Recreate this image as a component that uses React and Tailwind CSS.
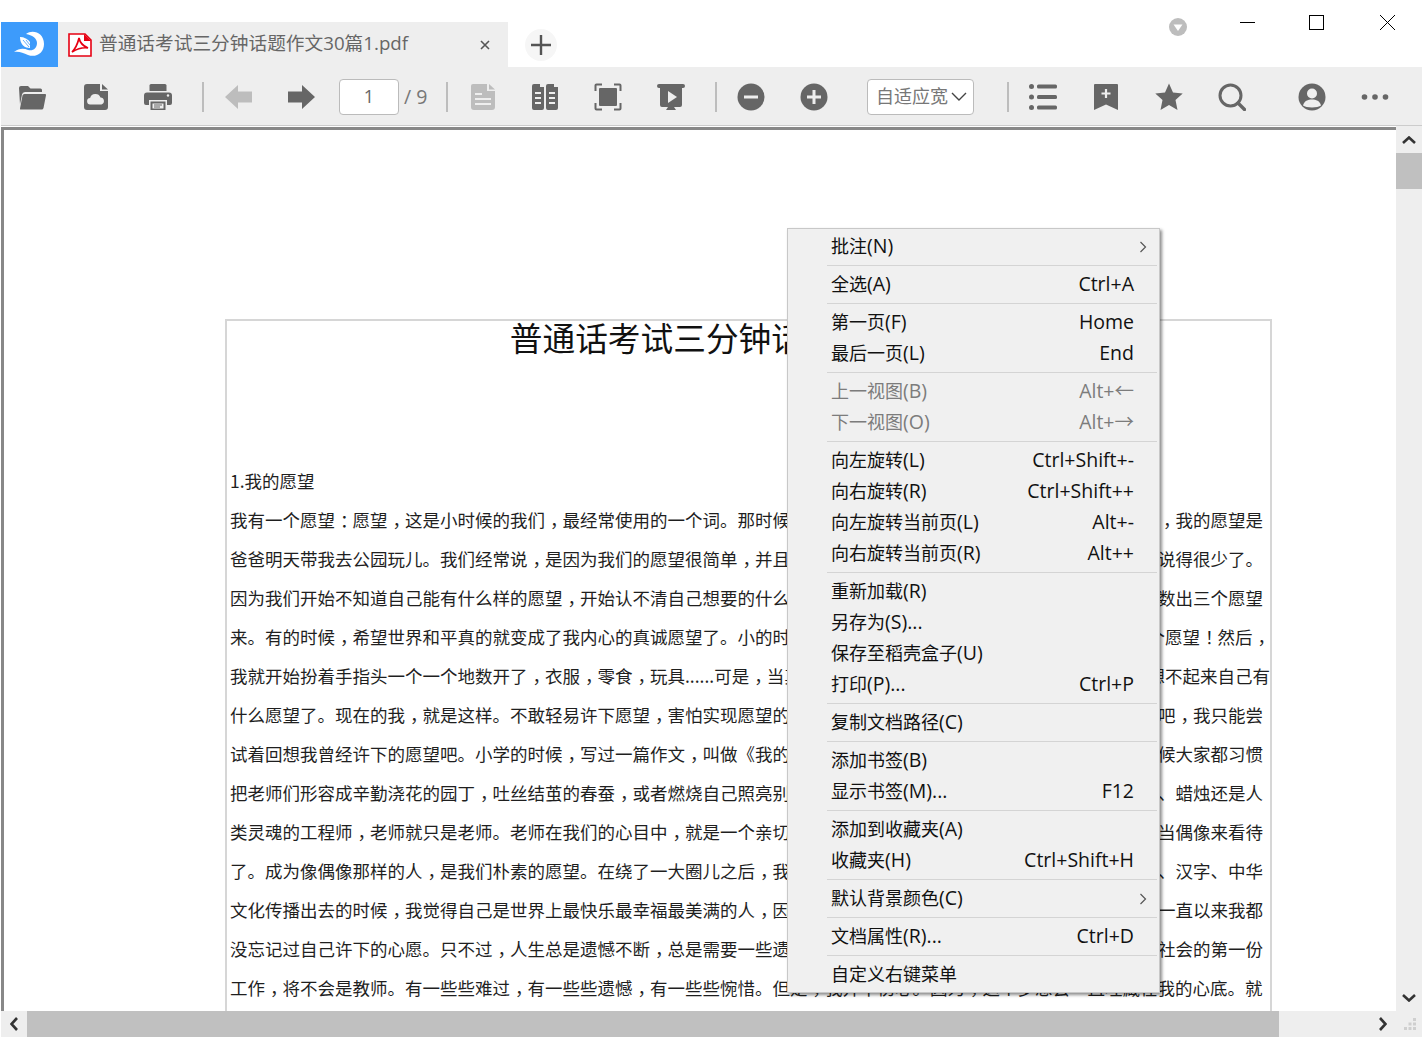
import React from "react";

const PAGE_LINES = [
  ["我有一个愿望：愿望，这是小时候的我们，最经常使用的一个词。那时候，", "，我的愿望是"],
  ["爸爸明天带我去公园玩儿。我们经常说，是因为我们的愿望很简单，并且", "说得很少了。"],
  ["因为我们开始不知道自己能有什么样的愿望，开始认不清自己想要的什么", "数出三个愿望"],
  ["来。有的时候，希望世界和平真的就变成了我内心的真诚愿望了。小的时候", "个愿望！然后，", true],
  ["我就开始扮着手指头一个一个地数开了，衣服，零食，玩具......可是，当真", "想不起来自己有", true],
  ["什么愿望了。现在的我，就是这样。不敢轻易许下愿望，害怕实现愿望的", "吧，我只能尝"],
  ["试着回想我曾经许下的愿望吧。小学的时候，写过一篇作文，叫做《我的", "候大家都习惯"],
  ["把老师们形容成辛勤浇花的园丁，吐丝结茧的春蚕，或者燃烧自己照亮别", "、蜡烛还是人"],
  ["类灵魂的工程师，老师就只是老师。老师在我们的心目中，就是一个亲切", "当偶像来看待"],
  ["了。成为像偶像那样的人，是我们朴素的愿望。在绕了一大圈儿之后，我", "、汉字、中华"],
  ["文化传播出去的时候，我觉得自己是世界上最快乐最幸福最美满的人，因", "一直以来我都"],
  ["没忘记过自己许下的心愿。只不过，人生总是遗憾不断，总是需要一些遗", "社会的第一份"],
  ["工作，将不会是教师。有一些些难过，有一些些遗憾，有一些些惋惜。但是，我并不伤心。因为，这个梦想会一直埋藏在我的心底。就", ""],
];

// null = separator
const MENU = [
  { label: "批注(N)", arrow: true },
  null,
  { label: "全选(A)", key: "Ctrl+A" },
  null,
  { label: "第一页(F)", key: "Home" },
  { label: "最后一页(L)", key: "End" },
  null,
  { label: "上一视图(B)", key: "Alt+←", off: true },
  { label: "下一视图(O)", key: "Alt+→", off: true },
  null,
  { label: "向左旋转(L)", key: "Ctrl+Shift+-" },
  { label: "向右旋转(R)", key: "Ctrl+Shift++" },
  { label: "向左旋转当前页(L)", key: "Alt+-" },
  { label: "向右旋转当前页(R)", key: "Alt++" },
  null,
  { label: "重新加载(R)" },
  { label: "另存为(S)..." },
  { label: "保存至稻壳盒子(U)" },
  { label: "打印(P)...", key: "Ctrl+P" },
  null,
  { label: "复制文档路径(C)" },
  null,
  { label: "添加书签(B)" },
  { label: "显示书签(M)...", key: "F12" },
  null,
  { label: "添加到收藏夹(A)" },
  { label: "收藏夹(H)", key: "Ctrl+Shift+H" },
  null,
  { label: "默认背景颜色(C)", arrow: true },
  null,
  { label: "文档属性(R)...", key: "Ctrl+D" },
  null,
  { label: "自定义右键菜单" },
];

function Ico({ children, className = "" }) {
  return (
    <svg viewBox="0 0 28 28" className={`w-7 h-7 shrink-0 ${className}`} fill="#666">
      {children}
    </svg>
  );
}

function Sep({ className = "" }) {
  return <div className={`w-[2px] h-[30px] bg-[#bdbdbd] shrink-0 ${className}`} />;
}

// the source font centres ，：！ in their cell
function PageText({ text }) {
  return text.split(/([，：！])/).map((part, i) =>
    i % 2 ? (
      <span key={i} className="relative left-[5px]">
        {part}
      </span>
    ) : (
      part
    )
  );
}

function MenuRow({ item }) {
  const at = item.label.indexOf("(");
  const zh = at < 0 ? item.label : item.label.slice(0, at);
  const rest = at < 0 ? "" : item.label.slice(at);
  return (
    <div className={`flex items-center h-[31px] pb-[2px] pl-[43px] pr-[25px] relative ${item.off ? "text-[#7c7c7c]" : "text-[#111]"}`}>
      <span>
        {zh}
        <span className="text-[19.5px]">{rest}</span>
      </span>
      {item.key && <span className="ml-auto text-[19.5px]">{item.key}</span>}
      {item.arrow && (
        <svg viewBox="0 0 8 12" className="w-2 h-3 absolute right-[12px] top-[10px]" fill="none" stroke="#555" strokeWidth="1.2">
          <path d="M1.5 1 L6.5 6 L1.5 11" />
        </svg>
      )}
    </div>
  );
}

export default function App() {
  return (
    <div className="relative w-full h-[1038px] overflow-hidden bg-white px-px pb-px flex flex-col font-['Open_Sans','Noto_Sans_CJK_SC',sans-serif]">
      {/* title bar */}
      <div className="flex h-[67px] shrink-0">
        <div className="self-end flex h-[45px]">
          <div className="w-[57px] h-[45px] bg-[#3d9bfb]">
            <svg viewBox="0 0 57 45" className="w-[57px] h-[45px]" fill="#fff">
              <path d="M25 12 C32 7 43 11 43 22 C43 31 35 36 27 33 C22 31 18 29 13 30 C18 26 23 26 27 28 C32 29.5 36 26 36 21 C36 16 31 13 25 12 Z" />
              <path d="M19 15 C23 15 27 17 29 20 L29 26 C24 26 19 23 19 15 Z" />
              <path d="M22 18 L28 25 M25 18 L29 23" stroke="#3d9bfb" strokeWidth="0.8" fill="none" />
            </svg>
          </div>
          <div className="w-[450px] h-[45px] bg-[#eeeeee] flex items-center pl-[10px] text-[18.7px] text-[#666]">
            <svg viewBox="0 0 24 24" className="w-6 h-6 shrink-0">
              <path d="M1 1 H17 L23 7 V23 H1 Z" fill="#fff" stroke="#e60012" strokeWidth="1.6" />
              <path d="M16 1 L23 8 H16 Z" fill="#e60012" />
              <path d="M11 5 C10 9 9 14 4 19 C9 16 14 14 20 15 C15 13 12 10 11 5 Z" fill="none" stroke="#e60012" strokeWidth="1.7" />
            </svg>
            <span className="ml-[7px] mb-[2px] whitespace-nowrap">普通话考试三分钟话题作文30篇1.pdf</span>
            <svg viewBox="0 0 10 10" className="w-[10px] h-[10px] ml-auto mr-[18px]" stroke="#555" strokeWidth="1.6">
              <path d="M1 1 L9 9 M9 1 L1 9" />
            </svg>
          </div>
          <div className="w-[32px] h-[32px] rounded-full bg-[#f6f6f6] ml-[17px] mt-[7px] flex items-center justify-center">
            <svg viewBox="0 0 20 20" className="w-5 h-5" stroke="#555" strokeWidth="2.4">
              <path d="M10 0 V20 M0 10 H20" />
            </svg>
          </div>
        </div>
        <div className="flex-1 flex justify-end items-start pr-[27px]">
          <svg viewBox="0 0 18 18" className="w-[18px] h-[18px] mt-[18px]">
            <circle cx="9" cy="9" r="9" fill="#bdbdbd" />
            <path d="M4.5 6.5 H13.5 L9 13 Z" fill="#fff" />
          </svg>
          <div className="w-[15px] h-px bg-black ml-[53px] mt-[22px]" />
          <div className="w-[15px] h-[15px] border border-black ml-[54px] mt-[15px]" />
          <svg viewBox="0 0 15 15" className="w-[15px] h-[15px] ml-[56px] mt-[15px]" stroke="#000" strokeWidth="1">
            <path d="M0 0 L15 15 M15 0 L0 15" />
          </svg>
        </div>
      </div>

      {/* toolbar */}
      <div className="flex items-center h-[59px] shrink-0 bg-[#eeeeee] border-b border-[#cccccc] pl-[18px] pt-[1px]">
        <Ico>
          <path d="M0 5 a2 2 0 0 1 2 -2 h7 l2.5 2.5 h10 a1.5 1.5 0 0 1 1.5 1.5 v2 h-17 a3 3 0 0 0 -3 2.5 l-2 10 Z" />
          <path d="M5.5 11 H26 a1 1 0 0 1 1 1.2 L24.5 25 a2 2 0 0 1 -2 1.6 H2 a1 1 0 0 1 -1 -1.2 L3.5 12.5 a2 2 0 0 1 2 -1.5 Z" />
        </Ico>
        <Ico className="ml-[35px]">
          <path d="M5 1 H18 V8 H26 V24 a3 3 0 0 1 -3 3 H5 a3 3 0 0 1 -3 -3 V4 a3 3 0 0 1 3 -3 Z" />
          <path d="M20 1 L26 6.5 H20 Z" />
          <path d="M8.5 21.5 a3.2 3.2 0 0 1 -0.4 -6.4 a5.5 5.5 0 0 1 10.4 -0.6 a3.6 3.6 0 0 1 1 7 Z" fill="#eeeeee" />
        </Ico>
        <Ico className="ml-[34px]">
          <path d="M7 1 H21 a1.5 1.5 0 0 1 1.5 1.5 V8 H5.5 V2.5 A1.5 1.5 0 0 1 7 1 Z" />
          <path d="M3 9.5 H25 a3 3 0 0 1 3 3 V20 a2 2 0 0 1 -2 2 H23 V17 H5 V22 H2 a2 2 0 0 1 -2 -2 V12.5 a3 3 0 0 1 3 -3 Z" />
          <path d="M6.5 18.5 H21.5 V27 H6.5 Z" />
          <path d="M8.5 20.5 H19.5 V25.5 H8.5 Z" fill="#eeeeee" />
          <path d="M10 22 H18 M10 24 H16" stroke="#666" strokeWidth="1" />
          <circle cx="24" cy="12.5" r="1.2" fill="#eeeeee" />
        </Ico>
        <Sep className="ml-[30px]" />
        <Ico className="ml-[21px]">
          <path d="M0 14 L13 2 V8.5 H27 V19.5 H13 V26 Z" fill="#bdbdbd" />
        </Ico>
        <Ico className="ml-[34px]">
          <path d="M28 14 L15 2 V8.5 H1 V19.5 H15 V26 Z" />
        </Ico>
        <div className="w-[60px] h-[36px] ml-[24px] bg-white border border-[#bbbbbb] rounded-[4px] flex items-center justify-center text-[18px] text-[#666]">
          1
        </div>
        <span className="ml-[5px] w-[24px] text-[19.5px] text-[#777] whitespace-nowrap">/ 9</span>
        <Sep className="ml-[18px]" />
        <Ico className="ml-[21px]">
          <path d="M4 1 H18 V8 H26 V24 a3 3 0 0 1 -3 3 H5 a3 3 0 0 1 -3 -3 V3 a2 2 0 0 1 2 -2 Z" fill="#bdbdbd" />
          <path d="M20 1 L26 6.5 H20 Z" fill="#bdbdbd" />
          <path d="M6 11 H13 M6 16 H22 M6 21 H22" stroke="#eeeeee" strokeWidth="2" />
        </Ico>
        <Ico className="ml-[34px]">
          <path d="M3 1 H9 V4 H13 V25 a2 2 0 0 1 -2 2 H3 a2 2 0 0 1 -2 -2 V3 a2 2 0 0 1 2 -2 Z" />
          <path d="M17 1 H23 V4 H27 V25 a2 2 0 0 1 -2 2 H17 a2 2 0 0 1 -2 -2 V3 a2 2 0 0 1 2 -2 Z" />
          <path d="M4 10 H10 M4 15 H10 M4 20 H10 M18 10 H24 M18 15 H24 M18 20 H24" stroke="#eeeeee" strokeWidth="1.8" />
        </Ico>
        <Ico className="ml-[35px]">
          <path d="M8 1.5 H2.5 a1 1 0 0 0 -1 1 V8 M20 1.5 H25.5 a1 1 0 0 1 1 1 V8 M8 26.5 H2.5 a1 1 0 0 1 -1 -1 V20 M20 26.5 H25.5 a1 1 0 0 0 1 -1 V20" fill="none" stroke="#666" strokeWidth="2" />
          <rect x="5" y="5" width="18" height="18" rx="1" />
        </Ico>
        <Ico className="ml-[35px]">
          <path d="M2 1 H26 a1.5 1.5 0 0 1 0 4 H25 V22 a2 2 0 0 1 -2 2 H5 a2 2 0 0 1 -2 -2 V5 H2 a1.5 1.5 0 0 1 0 -4 Z" />
          <path d="M11 24 L9 27 H19 L17 24 Z" />
          <path d="M11 8 L20 14 L11 20 Z" fill="#eeeeee" />
        </Ico>
        <Sep className="ml-[30px]" />
        <Ico className="ml-[20px]">
          <circle cx="14" cy="14" r="13.5" />
          <path d="M7 14 H21" stroke="#eeeeee" strokeWidth="3" />
        </Ico>
        <Ico className="ml-[35px]">
          <circle cx="14" cy="14" r="13.5" />
          <path d="M7 14 H21 M14 7 V21" stroke="#eeeeee" strokeWidth="3" />
        </Ico>
        <div className="w-[107px] h-[36px] ml-[39px] bg-white border border-[#bbbbbb] rounded-[4px] flex items-center pl-[8px] text-[18px] text-[#777] whitespace-nowrap">
          自适应宽
          <svg viewBox="0 0 16 9" className="w-4 h-[9px] ml-[3px]" fill="none" stroke="#444" strokeWidth="1.4">
            <path d="M1 1 L8 8 L15 1" />
          </svg>
        </div>
        <Sep className="ml-[33px]" />
        <Ico className="ml-[20px]">
          <circle cx="2.5" cy="3.5" r="2.5" />
          <circle cx="2.5" cy="14" r="2.5" />
          <circle cx="2.5" cy="24.5" r="2.5" />
          <rect x="8" y="1.5" width="20" height="4" rx="1.5" />
          <rect x="8" y="12" width="20" height="4" rx="1.5" />
          <rect x="8" y="22.5" width="20" height="4" rx="1.5" />
        </Ico>
        <Ico className="ml-[35px]">
          <path d="M3 1 H25 a1 1 0 0 1 1 1 V27 L14 21.5 L2 27 V2 a1 1 0 0 1 1 -1 Z" />
          <path d="M14 6 V15 M9.5 10.5 H18.5" stroke="#eeeeee" strokeWidth="2.2" />
        </Ico>
        <Ico className="ml-[35px]">
          <path d="M14 0.5 L18 9.5 L27.7 10.5 L20.5 17 L22.5 27 L14 22 L5.5 27 L7.5 17 L0.3 10.5 L10 9.5 Z" />
        </Ico>
        <Ico className="ml-[35px]">
          <circle cx="12.5" cy="12.5" r="10.5" fill="none" stroke="#666" strokeWidth="3" />
          <path d="M20 20 L26.5 26.5" stroke="#666" strokeWidth="3.4" strokeLinecap="round" />
        </Ico>
        <Ico className="ml-[52px]">
          <circle cx="14" cy="14" r="13.5" />
          <circle cx="14" cy="10.5" r="5" fill="#eeeeee" />
          <path d="M5 22.5 C6 18 10 16.5 14 16.5 C18 16.5 22 18 23 22.5 C20 25 8 25 5 22.5 Z" fill="#eeeeee" />
        </Ico>
        <Ico className="ml-[35px]">
          <circle cx="3.5" cy="14" r="2.8" />
          <circle cx="14" cy="14" r="2.8" />
          <circle cx="24.5" cy="14" r="2.8" />
        </Ico>
      </div>

      {/* viewer + vertical scrollbar */}
      <div className="flex flex-1 min-h-0">
        <div className="flex-1 min-w-0 overflow-hidden border-t-[3px] border-l-[3px] border-[#888888] mt-px">
          <div className="w-[1047px] h-[900px] ml-[221px] mt-[189px] border-2 border-b-0 border-[#d6d6d6] pl-[3px] text-[#1f1f1f] text-[17.5px] font-['Noto_Sans_CJK_SC',sans-serif]">
            <div className="h-[32px] leading-[32px] pr-px text-[32.7px] text-[#111] text-center whitespace-nowrap">
              普通话考试三分钟话题作文30篇1
            </div>
            <div className="mt-[108px] h-[39px] leading-[39px]">1.我的愿望</div>
            {PAGE_LINES.map(([left, right, wide]) => (
              <div key={left} className={`flex justify-between h-[39px] leading-[39px] whitespace-nowrap ${wide ? "w-[1040px]" : "w-[1033px]"}`}>
                <span>
                  <PageText text={left} />
                </span>
                <span>
                  <PageText text={right} />
                </span>
              </div>
            ))}
          </div>
        </div>
        <div className="w-[26px] shrink-0 bg-[#eeeeee] flex flex-col items-center">
          <div className="h-[27px] w-full flex items-center justify-center">
            <svg viewBox="0 0 14 8" className="w-[14px] h-2" fill="none" stroke="#333" strokeWidth="2.6">
              <path d="M1 7 L7 1.5 L13 7" />
            </svg>
          </div>
          <div className="h-[36px] w-full bg-[#c0c0c0]" />
          <div className="flex-1" />
          <div className="h-[27px] w-full flex items-center justify-center">
            <svg viewBox="0 0 14 8" className="w-[14px] h-2" fill="none" stroke="#333" strokeWidth="2.6">
              <path d="M1 1 L7 6.5 L13 1" />
            </svg>
          </div>
        </div>
      </div>

      {/* horizontal scrollbar */}
      <div className="flex items-center h-[26px] shrink-0 bg-[#eeeeee]">
        <div className="w-[26px] h-full flex items-center justify-center">
          <svg viewBox="0 0 8 14" className="w-2 h-[14px]" fill="none" stroke="#333" strokeWidth="2.6">
            <path d="M7 1 L1.5 7 L7 13" />
          </svg>
        </div>
        <div className="w-[1252px] h-full bg-[#c0c0c0]" />
        <svg viewBox="0 0 8 14" className="w-2 h-[14px] ml-[100px]" fill="none" stroke="#333" strokeWidth="2.6">
          <path d="M1 1 L6.5 7 L1 13" />
        </svg>
        <svg viewBox="0 0 12 12" className="w-3 h-3 ml-[17px]" fill="#cfcfcf">
          <rect x="9" y="0" width="3" height="3" />
          <rect x="4.5" y="4.5" width="3" height="3" />
          <rect x="9" y="4.5" width="3" height="3" />
          <rect x="0" y="9" width="3" height="3" />
          <rect x="4.5" y="9" width="3" height="3" />
          <rect x="9" y="9" width="3" height="3" />
        </svg>
      </div>

      {/* context menu */}
      <div className="absolute left-[787px] top-[228px] w-[373px] py-[2px] bg-[#f0f0f0] border border-[#c8c8c8] shadow-[2px_2px_3px_rgba(0,0,0,0.45)] text-[18px]">
        {MENU.map((item, i) =>
          item ? (
            <MenuRow key={i} item={item} />
          ) : (
            <div key={i} className="h-px bg-[#d4d4d4] my-[3px] ml-[39px] mr-[2px]" />
          )
        )}
      </div>
    </div>
  );
}
